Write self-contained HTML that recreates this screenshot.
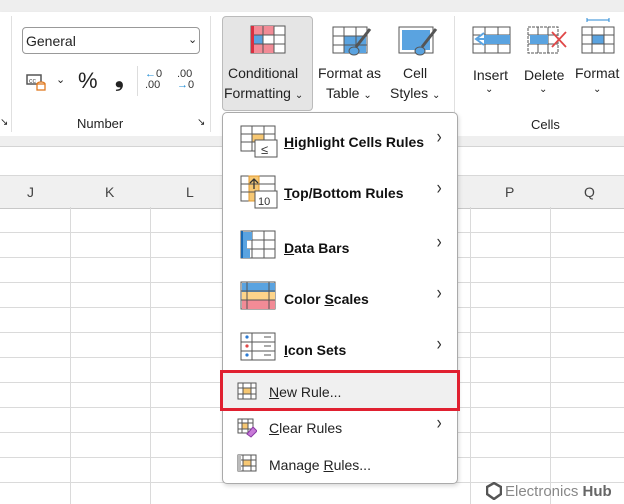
<!DOCTYPE html><html><head><style>
body{margin:0;width:624px;height:504px;overflow:hidden;position:relative;background:#fff;font-family:"Liberation Sans",sans-serif;color:#222}
.a{position:absolute}
.t{position:absolute;font-size:14px;white-space:nowrap}
.vl{position:absolute;top:207px;bottom:0;width:1px;background:#dadada}
.hl{position:absolute;left:0;right:0;height:1px;background:#dadada}
.mi{position:absolute;left:284px;font-size:14px;font-weight:bold;color:#111}
.ar{position:absolute;left:436px;font-size:19px;color:#333;transform:scaleX(.8)}
.mn{position:absolute;left:269px;font-size:14px;color:#222}
</style></head><body>
<div class="a" style="left:0;top:0;width:624px;height:12px;background:#eeeeee"></div>
<div class="a" style="left:0;top:12px;width:624px;height:124px;background:#fff;box-shadow:0 2px 3px rgba(0,0,0,.12)"></div>
<div class="a" style="left:0;top:136px;width:624px;height:10px;background:#efefef;border-bottom:1px solid #d4d4d4"></div>
<div class="a" style="left:0;top:175px;width:624px;height:32px;background:#f0f0f0;border-top:1px solid #d8d8d8;border-bottom:1px solid #c8c8c8"></div>
<div class="t" style="left:27px;top:184px;color:#444">J</div>
<div class="t" style="left:105px;top:184px;color:#444">K</div>
<div class="t" style="left:186px;top:184px;color:#444">L</div>
<div class="t" style="left:505px;top:184px;color:#444">P</div>
<div class="t" style="left:584px;top:184px;color:#444">Q</div>
<div class="vl" style="left:70px"></div><div class="vl" style="left:150px"></div><div class="vl" style="left:470px"></div><div class="vl" style="left:550px"></div>
<div class="hl" style="top:232px"></div><div class="hl" style="top:257px"></div><div class="hl" style="top:282px"></div><div class="hl" style="top:307px"></div><div class="hl" style="top:332px"></div><div class="hl" style="top:357px"></div><div class="hl" style="top:382px"></div><div class="hl" style="top:407px"></div><div class="hl" style="top:432px"></div><div class="hl" style="top:457px"></div><div class="hl" style="top:482px"></div>
<div class="a" style="left:11px;top:16px;width:1px;height:116px;background:#e0e0e0"></div>
<div class="a" style="left:210px;top:16px;width:1px;height:116px;background:#e0e0e0"></div>
<div class="a" style="left:454px;top:16px;width:1px;height:116px;background:#e0e0e0"></div>
<div class="t" style="left:0;top:117px;font-size:10px">↘</div>
<div class="a" style="left:22px;top:27px;width:178px;height:27px;border:1px solid #999;border-radius:4px;box-sizing:border-box"></div>
<div class="t" style="left:26px;top:33px">General</div>
<div class="t" style="left:188px;top:33px;font-size:11px">⌄</div>
<svg class="a" style="left:26px;top:72px" width="22" height="20"><rect x="1" y="3" width="14" height="9" fill="none" stroke="#555" stroke-width="1.5"/><text x="3" y="11" font-size="7" fill="#555">cc</text><ellipse cx="15" cy="12" rx="4" ry="2" fill="#fff" stroke="#e07a20" stroke-width="1.3"/><rect x="11" y="12" width="8" height="6" fill="#fff" stroke="#e07a20" stroke-width="1.3"/></svg>
<div class="t" style="left:56px;top:73px;font-size:11px">⌄</div>
<div class="t" style="left:78px;top:68px;font-size:22px">%</div>
<div class="t" style="left:115px;top:66px;font-size:22px;font-weight:bold">❟</div>
<div class="a" style="left:137px;top:66px;width:1px;height:30px;background:#ddd"></div>
<div class="t" style="left:145px;top:69px;font-size:11px;line-height:11px;color:#333"><span style="color:#1a8ad4">←</span>0<br>.00</div>
<div class="t" style="left:177px;top:69px;font-size:11px;line-height:11px;color:#333">.00<br><span style="color:#1a8ad4">→</span>0</div>
<div class="t" style="left:77px;top:116px;font-size:13px">Number</div>
<div class="t" style="left:197px;top:117px;font-size:10px">↘</div>
<div class="a" style="left:222px;top:16px;width:91px;height:95px;background:#e5e5e5;border:1px solid #bbb;border-radius:4px;box-sizing:border-box"></div>
<svg class="a" style="left:250px;top:25px" width="36" height="29"><rect x="1" y="1" width="34" height="27" fill="#fff" stroke="#555"/><rect x="4" y="1" width="20" height="9" fill="#f28b96"/><rect x="4" y="19" width="20" height="9" fill="#f28b96"/><rect x="4" y="10" width="9" height="9" fill="#5aa3e0"/><path d="M1 10H35M1 19H35M13 1V28M24 1V28" stroke="#555" fill="none"/><rect x="1" y="1" width="3" height="27" fill="#d83040"/></svg>
<div class="t" style="left:228px;top:65px">Conditional</div>
<div class="t" style="left:224px;top:85px">Formatting <span style="font-size:10px">⌄</span></div>
<svg class="a" style="left:332px;top:25px" width="40" height="32"><rect x="1" y="2" width="34" height="26" fill="#fff" stroke="#555"/><rect x="12" y="11" width="22" height="17" fill="#5aa3e0"/><path d="M1 11H35M1 20H35M12 2V28M24 2V28" stroke="#555" fill="none"/><path d="M38 4L24 22" stroke="#555" stroke-width="3"/><ellipse cx="22" cy="26" rx="5" ry="4" fill="#5aa3e0" stroke="#555"/></svg>
<div class="t" style="left:318px;top:65px">Format as</div>
<div class="t" style="left:326px;top:85px">Table <span style="font-size:10px">⌄</span></div>
<svg class="a" style="left:398px;top:25px" width="40" height="32"><rect x="1" y="2" width="34" height="26" fill="#fff" stroke="#555"/><rect x="4" y="5" width="28" height="20" fill="#5aa3e0"/><path d="M38 4L24 22" stroke="#555" stroke-width="3"/><ellipse cx="22" cy="26" rx="5" ry="4" fill="#5aa3e0" stroke="#555"/></svg>
<div class="t" style="left:403px;top:65px">Cell</div>
<div class="t" style="left:390px;top:85px">Styles <span style="font-size:10px">⌄</span></div>
<svg class="a" style="left:470px;top:25px" width="42" height="30"><rect x="3" y="2" width="37" height="26" fill="#fff" stroke="#555"/><path d="M3 10H40M3 19H40M15 2V28M28 2V28" stroke="#555" fill="none"/><rect x="10" y="10" width="30" height="9" fill="#5aa3e0"/><path d="M14 8L6 14L14 20M6 14H24" stroke="#5aa3e0" stroke-width="2" fill="#fff"/></svg>
<div class="t" style="left:473px;top:67px">Insert</div><div class="t" style="left:485px;top:84px;font-size:10px">⌄</div>
<svg class="a" style="left:527px;top:25px" width="42" height="30"><rect x="1" y="2" width="30" height="26" fill="#fff" stroke="#555" stroke-dasharray="3 1"/><path d="M1 10H31M1 19H31M11 2V28M21 2V28" stroke="#555" fill="none"/><rect x="3" y="10" width="18" height="9" fill="#5aa3e0"/><path d="M25 7L39 22M39 7L25 22" stroke="#e04848" stroke-width="1.8"/></svg>
<div class="t" style="left:524px;top:67px">Delete</div><div class="t" style="left:539px;top:84px;font-size:10px">⌄</div>
<svg class="a" style="left:581px;top:18px" width="34" height="38"><path d="M6 2H28M6 0V4M28 0V4" stroke="#2a8ad4"/><rect x="1" y="9" width="32" height="26" fill="#fff" stroke="#555"/><rect x="11" y="17" width="12" height="9" fill="#5aa3e0"/><path d="M1 17H33M1 26H33M11 9V35M23 9V35" stroke="#555" fill="none"/></svg>
<div class="t" style="left:575px;top:65px">Format</div><div class="t" style="left:593px;top:84px;font-size:10px">⌄</div>
<div class="t" style="left:531px;top:117px;font-size:13px">Cells</div>
<div class="a" style="left:222px;top:112px;width:236px;height:372px;background:#fff;border:1px solid #aaa;border-radius:5px;box-sizing:border-box;box-shadow:1px 2px 4px rgba(0,0,0,.15)"></div>
<svg class="a" style="left:240px;top:125px" width="40" height="34"><rect x="1" y="1" width="34" height="25" fill="#fff" stroke="#555"/><rect x="12" y="9" width="12" height="8" fill="#f7c873"/><path d="M1 9H35M1 17H35M12 1V26M24 1V26" stroke="#555" fill="none"/><rect x="15" y="15" width="22" height="17" fill="#fff" stroke="#555"/><text x="21" y="29" font-size="13" fill="#333">≤</text></svg>
<div class="mi" style="top:134px"><u>H</u>ighlight Cells Rules</div><div class="ar" style="top:127px">›</div>
<svg class="a" style="left:240px;top:175px" width="40" height="34"><rect x="1" y="1" width="34" height="25" fill="#fff" stroke="#555"/><rect x="9" y="1" width="10" height="25" fill="#f7c873" stroke="#e09a30"/><path d="M1 9H35M1 17H35" stroke="#555" fill="none"/><path d="M14 14V4M10 8L14 4L18 8" stroke="#333" fill="none" stroke-width="1.3"/><rect x="15" y="16" width="22" height="17" fill="#fff" stroke="#555"/><text x="18" y="30" font-size="11" fill="#333">10</text></svg>
<div class="mi" style="top:185px"><u>T</u>op/Bottom Rules</div><div class="ar" style="top:178px">›</div>
<svg class="a" style="left:240px;top:230px" width="38" height="30"><rect x="1" y="1" width="34" height="27" fill="#fff" stroke="#555"/><path d="M1 10H35M1 19H35M12 1V28M24 1V28" stroke="#555" fill="none"/><rect x="2" y="2" width="10" height="8" fill="#5aa3e0"/><rect x="2" y="10" width="5" height="9" fill="#5aa3e0"/><rect x="2" y="19" width="8" height="9" fill="#5aa3e0"/><path d="M2 1V28" stroke="#1a6ab4" stroke-width="2"/></svg>
<div class="mi" style="top:240px"><u>D</u>ata Bars</div><div class="ar" style="top:232px">›</div>
<svg class="a" style="left:240px;top:281px" width="38" height="30"><rect x="1" y="1" width="34" height="27" fill="#fff" stroke="#555"/><rect x="2" y="2" width="33" height="9" fill="#5aa3e0"/><rect x="2" y="11" width="33" height="8" fill="#fdd48a"/><rect x="2" y="19" width="33" height="9" fill="#f28b96"/><path d="M1 10H35M1 19H35M7 1V28M29 1V28" stroke="#555" fill="none"/></svg>
<div class="mi" style="top:291px">Color <u>S</u>cales</div><div class="ar" style="top:283px">›</div>
<svg class="a" style="left:240px;top:332px" width="38" height="30"><rect x="1" y="1" width="34" height="27" fill="#fff" stroke="#555"/><path d="M1 10H35M1 19H35M12 1V28" stroke="#555" fill="none"/><circle cx="7" cy="5" r="1.6" fill="#2a7ad4"/><circle cx="7" cy="14" r="1.6" fill="#e04848"/><circle cx="7" cy="23" r="1.6" fill="#2a7ad4"/><path d="M24 5H31M24 14H31M24 23H31" stroke="#555"/></svg>
<div class="mi" style="top:342px"><u>I</u>con Sets</div><div class="ar" style="top:334px">›</div>
<div class="a" style="left:223px;top:373px;width:234px;height:36px;background:#f0f0f0"></div>
<div class="a" style="left:220px;top:370px;width:240px;height:41px;border:3px solid #e02030;box-sizing:border-box"></div>
<svg class="a" style="left:237px;top:382px" width="20" height="20"><rect x="1" y="1" width="18" height="16" fill="#fff" stroke="#555"/><rect x="6" y="6" width="8" height="6" fill="#f7c873"/><path d="M1 6H19M1 12H19M6 1V17M14 1V17" stroke="#555" fill="none"/></svg>
<div class="mn" style="top:384px"><u>N</u>ew Rule...</div>
<svg class="a" style="left:237px;top:418px" width="20" height="20"><rect x="1" y="1" width="15" height="14" fill="#fff" stroke="#555"/><rect x="5" y="5" width="6" height="6" fill="#f7c873"/><path d="M1 5H16M1 11H16M5 1V15M11 1V15" stroke="#555" fill="none"/><path d="M10 16L16 9L20 13L14 19Z" fill="#c87ad8" stroke="#8a3aa4"/></svg>
<div class="mn" style="top:420px"><u>C</u>lear Rules</div><div class="ar" style="top:413px">›</div>
<svg class="a" style="left:237px;top:454px" width="20" height="20"><rect x="1" y="1" width="18" height="16" fill="#fff" stroke="#555"/><rect x="6" y="6" width="8" height="6" fill="#f7c873"/><path d="M1 6H19M1 12H19M6 1V17M14 1V17" stroke="#555" fill="none"/><rect x="1" y="1" width="3" height="16" fill="#bbb"/></svg>
<div class="mn" style="top:457px">Manage <u>R</u>ules...</div>
<svg class="a" style="left:486px;top:482px" width="16" height="18"><path d="M8 1L15 5V12L8 17L1 12V5Z" fill="none" stroke="#555" stroke-width="2.5"/></svg>
<div class="t" style="left:505px;top:483px;font-size:15px;color:#888">Electronics <b style="color:#666">Hub</b></div>
</body></html>
